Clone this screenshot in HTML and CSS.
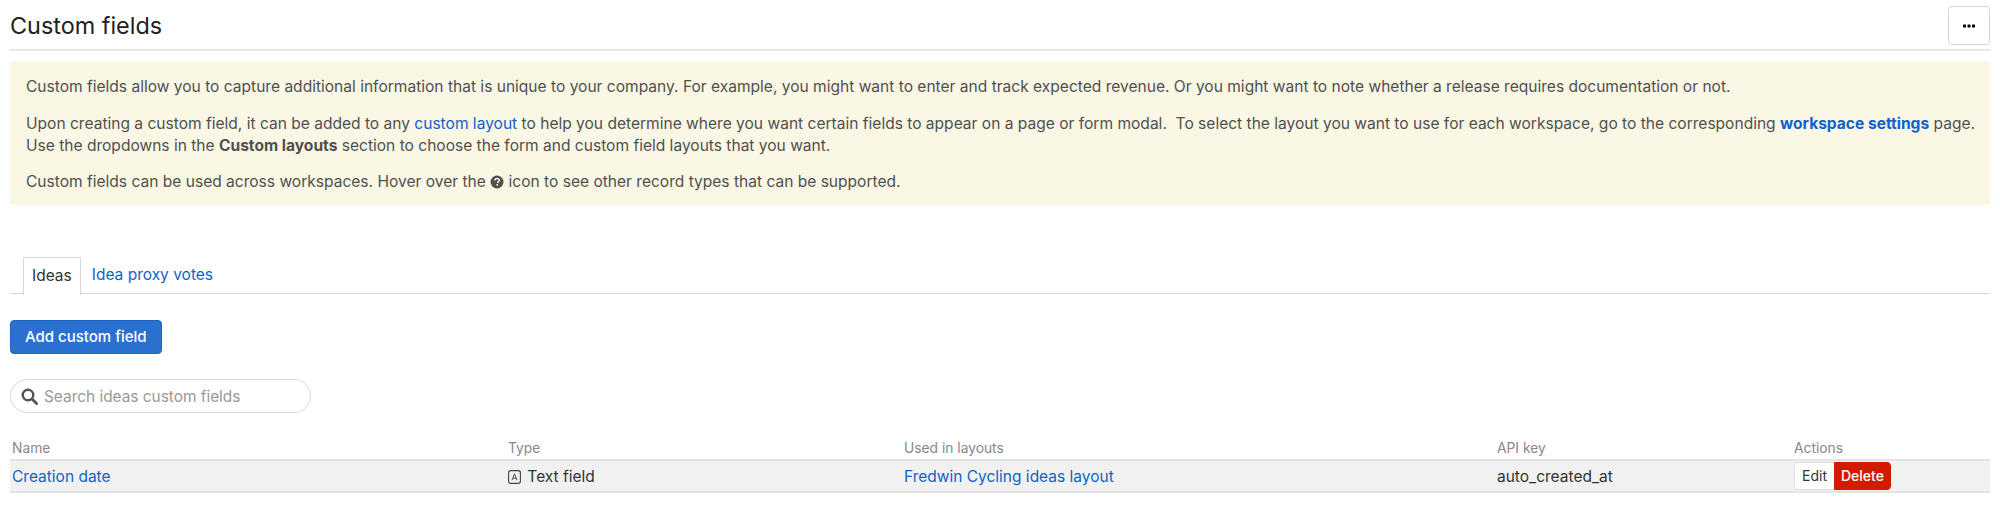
FILE: index.html
```html
<!DOCTYPE html>
<html lang="en">
<head>
    <meta charset="UTF-8">
    <meta name="viewport" content="width=device-width, initial-scale=1.0">
    <title>Custom fields</title>
    <link rel="stylesheet" href="styles.css">
</head>
<body>

<header class="page-header">
    <h1>Custom fields</h1>
    <button class="more-button" type="button" aria-label="More">
        <svg width="12" height="4" viewBox="0 0 12 4"><rect x="0" y="0.5" width="3" height="3" rx="0.6"/><rect x="4.5" y="0.5" width="3" height="3" rx="0.6"/><rect x="9" y="0.5" width="3" height="3" rx="0.6"/></svg>
    </button>
</header>

<div class="notice">
    <p>Custom fields allow you to capture additional information that is unique to your company. For example, you might want to enter and track expected revenue. Or you might want to note whether a release requires documentation or not.</p>
    <p>Upon creating a custom field, it can be added to any <a href="#">custom layout</a> to help you determine where you want certain fields to appear on a page or form modal. &nbsp;To select the layout you want to use for each workspace, go to the corresponding <a href="#"><b>workspace settings</b></a> page.<br>Use the dropdowns in the <b>Custom layouts</b> section to choose the form and custom field layouts that you want.</p>
    <p>Custom fields can be used across workspaces. Hover over the
        <svg class="help-icon" width="14" height="14" viewBox="0 0 14 14"><circle cx="7" cy="7" r="6.5" fill="#505050"/><path d="M4.9 5.5C5 4.3 5.9 3.6 7.1 3.6c1.2 0 2.1.7 2.1 1.8 0 1.5-1.7 1.5-1.7 2.7" fill="none" stroke="#faf7e4" stroke-width="1.5"/><rect x="6.4" y="9" width="1.6" height="1.6" fill="#faf7e4"/></svg>
        icon to see other record types that can be supported.</p>
</div>

<nav class="tabs">
    <a class="tab active" href="#">Ideas</a>
    <a class="tab" href="#">Idea proxy votes</a>
</nav>

<a class="add-button" href="#">Add custom field</a>

<div class="search">
    <svg width="17" height="17" viewBox="0 0 17 17"><circle cx="7" cy="7" r="5.3" fill="none" stroke="#555" stroke-width="2.4"/><path d="M11 11l4.6 4.6" stroke="#555" stroke-width="2.8" stroke-linecap="round"/></svg>
    <input type="text" placeholder="Search ideas custom fields">
</div>

<table class="fields">
    <thead>
        <tr>
            <th class="col-name">Name</th>
            <th class="col-type">Type</th>
            <th class="col-layouts">Used in layouts</th>
            <th class="col-key">API key</th>
            <th>Actions</th>
        </tr>
    </thead>
    <tbody>
        <tr>
            <td><a href="#">Creation date</a></td>
            <td>
                <svg class="type-icon" width="13" height="14" viewBox="0 0 13 14"><rect x="0.6" y="0.6" width="11.8" height="12.8" rx="2.2" fill="none" stroke="#444" stroke-width="1.1"/><path d="M4 10.2l2.5-6.4 2.5 6.4M4.9 8.2h3.2" fill="none" stroke="#444" stroke-width="0.9"/></svg>
                Text field
            </td>
            <td><a href="#">Fredwin Cycling ideas layout</a></td>
            <td>auto_created_at</td>
            <td>
                <div class="actions">
                    <a class="edit" href="#">Edit</a>
                    <a class="delete" href="#">Delete</a>
                </div>
            </td>
        </tr>
    </tbody>
</table>

</body>
</html>
```

FILE: styles.css
```css
body {
    font-family: Inter, Arial, sans-serif;
    font-size: 15.5px;
    color: #333;
    margin: 0;
    padding: 6px 10px 0;
    background-color: white;
}
a {
    color: #0f62c9;
    text-decoration: none;
}
.page-header {
    display: flex;
    justify-content: space-between;
    align-items: flex-start;
    height: 43px;
    border-bottom: 2px solid #e8e8e8;
}
h1 {
    margin: 6px 0 0;
    font-size: 23.4px;
    line-height: 28px;
    font-weight: 400;
    color: #222;
}
.more-button {
    display: flex;
    align-items: center;
    justify-content: center;
    width: 42px;
    height: 39px;
    padding: 0;
    background: white;
    border: 1px solid #d5d5d5;
    border-radius: 4px;
}
.notice {
    margin-top: 10px;
    height: 144px;
    box-sizing: border-box;
    padding: 15px 15px 15px 16px;
    background-color: #faf7e4;
    border-radius: 4px;
    color: #505050;
    font-size: 15.55px;
    line-height: 22px;
}
.notice p {
    margin: 0 0 14.5px;
}
.help-icon {
    vertical-align: -2px;
}
.tabs {
    display: flex;
    margin-top: 52px;
    height: 36px;
    padding-left: 13px;
    border-bottom: 1px solid #d8d8d8;
}
.tab {
    padding: 0 9px 0 11px;
    line-height: 36px;
    height: 36px;
}
.tab.active {
    padding: 0 8px;
    color: #333;
    background: white;
    border: 1px solid #d8d8d8;
    border-bottom: none;
    height: 37px;
}
.add-button {
    display: inline-block;
    margin-top: 26px;
    padding: 0 14px;
    font-size: 15px;
    line-height: 32px;
    background-color: #2a70d0;
    border: 1px solid #1f63c0;
    border-radius: 4px;
    color: white;
    font-weight: 500;
}
.search {
    display: flex;
    align-items: center;
    gap: 6px;
    width: 301px;
    height: 34px;
    box-sizing: border-box;
    margin-top: 25px;
    padding: 0 10px;
    border: 1px solid #d8d8d8;
    border-radius: 17px;
}
.search input {
    flex: 1;
    min-width: 0;
    border: none;
    outline: none;
    padding: 0;
    font-family: inherit;
    font-size: 15.4px;
}
.search input::placeholder {
    color: #999;
}
.fields {
    width: 100%;
    margin-top: 26px;
    border-collapse: collapse;
    table-layout: fixed;
}
.col-name { width: 492px; }
.col-type { width: 392px; }
.col-layouts { width: 589px; }
.col-key { width: 293px; }
.fields th {
    padding: 0 2px 3px;
    height: 17px;
    text-align: left;
    font-weight: 400;
    font-size: 13.8px;
    color: #888;
}
.fields td {
    height: 30px;
    padding: 0 2px;
    background-color: #f1f1f1;
    border-top: 2px solid #e3e3e3;
    border-bottom: 2px solid #e3e3e3;
    color: #333;
}
.type-icon {
    vertical-align: -2px;
    margin-right: 2px;
}
.actions {
    display: flex;
    height: 28px;
    font-size: 14px;
    line-height: 26px;
}
.actions .edit {
    padding: 0 7px;
    color: #333;
    background: white;
    border: 1px solid #ddd;
    border-right: none;
    border-radius: 4px 0 0 4px;
}
.actions .delete {
    padding: 0 6px;
    color: white;
    font-weight: 500;
    background-color: #d21a00;
    border: 1px solid #d21a00;
    border-radius: 0 4px 4px 0;
}
```
